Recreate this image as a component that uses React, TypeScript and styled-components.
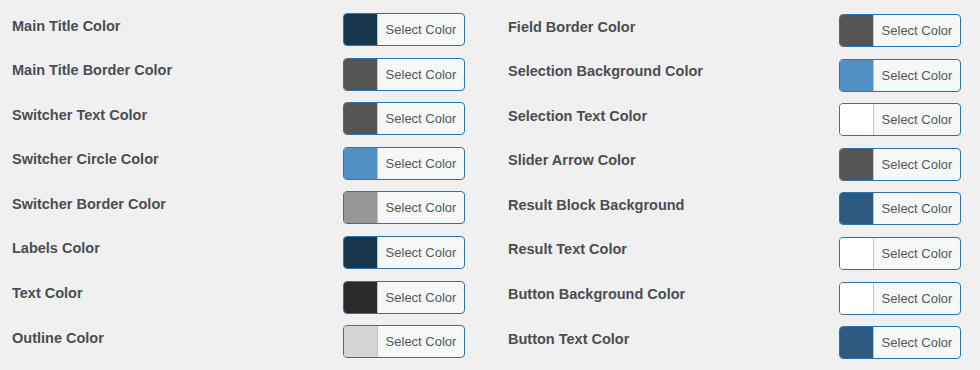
import React from "react";
import styled, { createGlobalStyle } from "styled-components";

const GlobalStyle = createGlobalStyle`
  html, body {
    margin: 0;
    padding: 0;
    background: #f0f0f1;
  }
  body {
    font-family: "Liberation Sans", Arial, sans-serif;
  }
`;

const Page = styled.div`
  width: 980px;
  height: 370px;
  box-sizing: border-box;
  padding: 13px 19px 0 12px;
  background: #f0f0f1;
`;

const Columns = styled.div`
  display: grid;
  grid-template-columns: 453px 453px;
  column-gap: 43px;
`;

const Column = styled.div<{ $offset?: number }>`
  display: flex;
  flex-direction: column;
  gap: 11.6px;
  padding-top: ${(p) => p.$offset ?? 0}px;
`;

const Row = styled.div`
  display: flex;
  align-items: flex-start;
  justify-content: space-between;
  height: 33px;
`;

const Label = styled.span`
  margin-top: 2.5px;
  font-size: 14.5px;
  line-height: 20px;
  font-weight: 700;
  color: #4a4d52;
`;

const ColorButton = styled.button`
  display: flex;
  align-items: stretch;
  width: 122px;
  height: 33px;
  padding: 0;
  margin: 0;
  border: 1px solid #2c72ad;
  border-radius: 4px;
  background: #f6f7f7;
  overflow: hidden;
  cursor: pointer;
  box-sizing: border-box;
`;

const Swatch = styled.span<{ $color: string }>`
  flex: 0 0 33px;
  background: ${(p) => p.$color};
  border-right: 1px solid #c3c4c7;
`;

const ButtonText = styled.span`
  flex: 1;
  display: flex;
  align-items: center;
  justify-content: center;
  font-family: "Liberation Sans", Arial, sans-serif;
  font-size: 13px;
  color: #50575e;
`;

type Item = { label: string; color: string };

const left: Item[] = [
  { label: "Main Title Color", color: "#18364e" },
  { label: "Main Title Border Color", color: "#555555" },
  { label: "Switcher Text Color", color: "#555555" },
  { label: "Switcher Circle Color", color: "#5190c5" },
  { label: "Switcher Border Color", color: "#979797" },
  { label: "Labels Color", color: "#18364e" },
  { label: "Text Color", color: "#2b2b2b" },
  { label: "Outline Color", color: "#d5d5d5" },
];

const right: Item[] = [
  { label: "Field Border Color", color: "#555555" },
  { label: "Selection Background Color", color: "#5190c5" },
  { label: "Selection Text Color", color: "#ffffff" },
  { label: "Slider Arrow Color", color: "#555555" },
  { label: "Result Block Background", color: "#2d5a80" },
  { label: "Result Text Color", color: "#ffffff" },
  { label: "Button Background Color", color: "#ffffff" },
  { label: "Button Text Color", color: "#2d5a80" },
];

const ColorRow: React.FC<Item> = ({ label, color }) => (
  <Row>
    <Label>{label}</Label>
    <ColorButton type="button">
      <Swatch $color={color} />
      <ButtonText>Select Color</ButtonText>
    </ColorButton>
  </Row>
);

export default function App() {
  return (
    <>
      <GlobalStyle />
      <Page>
        <Columns>
          <Column>
            {left.map((i) => (
              <ColorRow key={i.label} {...i} />
            ))}
          </Column>
          <Column $offset={1}>
            {right.map((i) => (
              <ColorRow key={i.label} {...i} />
            ))}
          </Column>
        </Columns>
      </Page>
    </>
  );
}
